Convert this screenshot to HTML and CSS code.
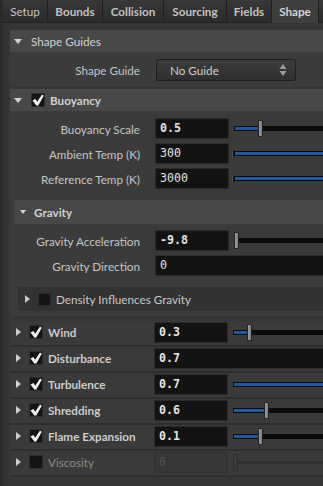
FILE: index.html
```html
<!DOCTYPE html>
<html lang="en">
  <head>
    <meta charset="UTF-8" />
    <title>Shape</title>
    <link rel="stylesheet" href="styles.css">
  </head>
  <body>
    <div class="tabs">
      <div class="tab w-setup">Setup</div>
      <div class="tab bold w-bounds">Bounds</div>
      <div class="tab bold w-collision">Collision</div>
      <div class="tab bold w-sourcing">Sourcing</div>
      <div class="tab bold w-fields">Fields</div>
      <div class="tab bold active w-shape">Shape</div>
      <div class="tab w-more"></div>
    </div>

    <div class="panel">
      <!-- Shape Guides -->
      <div class="folder">
        <div class="folder-head">
          <span class="tri-down"></span>
          <span class="head-title">Shape Guides</span>
        </div>
        <div class="folder-body guides">
          <div class="row">
            <span class="label">Shape Guide</span>
            <div class="menu">
              <span>No Guide</span>
              <svg class="updown" width="8" height="12" viewBox="0 0 8 12">
                <path d="M4 0 L7.5 5 L0.5 5 Z" fill="#9a9a9a" />
                <path d="M4 12 L7.5 7 L0.5 7 Z" fill="#9a9a9a" />
              </svg>
            </div>
          </div>
        </div>
      </div>

      <!-- Buoyancy -->
      <div class="folder">
        <div class="folder-head">
          <span class="tri-down"></span>
          <span class="check on"><svg width="12" height="12" viewBox="0 0 12 12"><path d="M0.5 6.6 L3.5 5.1 L5.2 7.8 L10 0.4 L11.8 1.7 L6.3 11.6 L4.3 11.6 Z" fill="#f2f2f2" /></svg></span>
          <span class="head-title bold">Buoyancy</span>
        </div>
        <div class="folder-body buoyancy">
          <div class="row">
            <span class="label">Buoyancy Scale</span>
            <div class="field bold">0.5</div>
            <div class="slider"><span class="fill" style="width: 24px"></span><span class="knob"></span><span class="rest"></span></div>
          </div>
          <div class="row">
            <span class="label">Ambient Temp (K)</span>
            <div class="field">300</div>
            <div class="slider"><span class="stub"></span><span class="fill full"></span></div>
          </div>
          <div class="row">
            <span class="label">Reference Temp (K)</span>
            <div class="field">3000</div>
            <div class="slider"><span class="stub"></span><span class="fill full"></span></div>
          </div>

          <!-- Gravity -->
          <div class="folder gravity">
            <div class="folder-head sub">
              <span class="tri-down"></span>
              <span class="head-title bold">Gravity</span>
            </div>
            <div class="folder-body">
              <div class="row">
                <span class="label">Gravity Acceleration</span>
                <div class="field bold">-9.8</div>
                <div class="slider"><span class="knob"></span><span class="rest"></span></div>
              </div>
              <div class="row">
                <span class="label">Gravity Direction</span>
                <div class="field wide">0</div>
              </div>
              <div class="density">
                <span class="tri-right"></span>
                <span class="check"></span>
                <span class="head-title">Density Influences Gravity</span>
              </div>
            </div>
          </div>
        </div>
      </div>

      <!-- Toggle folders -->
      <div class="toggles">
        <div class="toggle">
          <span class="tri-right"></span>
          <span class="check on"><svg width="12" height="12" viewBox="0 0 12 12"><path d="M0.5 6.6 L3.5 5.1 L5.2 7.8 L10 0.4 L11.8 1.7 L6.3 11.6 L4.3 11.6 Z" fill="#f2f2f2" /></svg></span>
          <span class="toggle-name">Wind</span>
          <div class="field bold">0.3</div>
          <div class="slider"><span class="fill" style="width: 14px"></span><span class="knob"></span><span class="rest"></span></div>
        </div>
        <div class="toggle">
          <span class="tri-right"></span>
          <span class="check on"><svg width="12" height="12" viewBox="0 0 12 12"><path d="M0.5 6.6 L3.5 5.1 L5.2 7.8 L10 0.4 L11.8 1.7 L6.3 11.6 L4.3 11.6 Z" fill="#f2f2f2" /></svg></span>
          <span class="toggle-name">Disturbance</span>
          <div class="field bold wide">0.7</div>
        </div>
        <div class="toggle">
          <span class="tri-right"></span>
          <span class="check on"><svg width="12" height="12" viewBox="0 0 12 12"><path d="M0.5 6.6 L3.5 5.1 L5.2 7.8 L10 0.4 L11.8 1.7 L6.3 11.6 L4.3 11.6 Z" fill="#f2f2f2" /></svg></span>
          <span class="toggle-name">Turbulence</span>
          <div class="field bold">0.7</div>
          <div class="slider"><span class="fill full"></span></div>
        </div>
        <div class="toggle">
          <span class="tri-right"></span>
          <span class="check on"><svg width="12" height="12" viewBox="0 0 12 12"><path d="M0.5 6.6 L3.5 5.1 L5.2 7.8 L10 0.4 L11.8 1.7 L6.3 11.6 L4.3 11.6 Z" fill="#f2f2f2" /></svg></span>
          <span class="toggle-name">Shredding</span>
          <div class="field bold">0.6</div>
          <div class="slider"><span class="fill" style="width: 31px"></span><span class="knob"></span><span class="rest"></span></div>
        </div>
        <div class="toggle">
          <span class="tri-right"></span>
          <span class="check on"><svg width="12" height="12" viewBox="0 0 12 12"><path d="M0.5 6.6 L3.5 5.1 L5.2 7.8 L10 0.4 L11.8 1.7 L6.3 11.6 L4.3 11.6 Z" fill="#f2f2f2" /></svg></span>
          <span class="toggle-name">Flame Expansion</span>
          <div class="field bold">0.1</div>
          <div class="slider"><span class="fill" style="width: 25px"></span><span class="knob"></span><span class="rest"></span></div>
        </div>
        <div class="toggle off">
          <span class="tri-right"></span>
          <span class="check"></span>
          <span class="toggle-name">Viscosity</span>
          <div class="field">0</div>
          <div class="slider"><span class="knob"></span><span class="rest"></span></div>
        </div>
      </div>
    </div>
  </body>
</html>
```

FILE: styles.css
```css
* {
  margin: 0;
  padding: 0;
  box-sizing: border-box;
}

body {
  width: 323px;
  height: 486px;
  overflow: hidden;
  background: #353535;
  color: #c6c6c6;
  font-family: 'Lato', 'Noto Sans', sans-serif;
  font-size: 11.7px;
  border-left: 3px solid #2a2a2a;
}

.bold {
  font-weight: bold;
}

/* Tabs */
.tabs {
  display: flex;
  gap: 1px;
  height: 23px;
  background: #1f1f1f;
  border-bottom: 1px solid #222;
  width: 340px;
}

.tab {
  flex: none;
  height: 22px;
  line-height: 22px;
  text-align: center;
  background: linear-gradient(to bottom, #383838, #2b2b2b);
  color: #c2c2c2;
}

.tab.active {
  height: 23px;
  background: #3e3e3e;
  color: #d4d4d4;
}

.w-setup { width: 44px; }
.w-bounds { width: 54px; }
.w-collision { width: 60px; }
.w-sourcing { width: 62px; }
.w-fields { width: 44px; }
.w-shape { width: 46px; }
.w-more { width: 20px; }

/* Panel */
.panel {
  padding: 7px 0 0 7px;
  width: 360px;
}

.folder {
  margin-bottom: 2px;
}

.folder-head {
  display: flex;
  align-items: center;
  height: 22px;
  background: #484848;
  color: #d2d2d2;
}

.folder-head.sub {
  height: 24px;
}

.tri-down {
  width: 0;
  height: 0;
  margin: 0 9px 0 4px;
  border-left: 4px solid transparent;
  border-right: 4px solid transparent;
  border-top: 5px solid #d4d4d4;
}

.gravity .tri-down {
  margin: 0 8px 0 6px;
  border-left-width: 3px;
  border-right-width: 3px;
  border-top-width: 4px;
}

.tri-right {
  width: 0;
  height: 0;
  margin: 0 9px 0 6px;
  border-top: 4px solid transparent;
  border-bottom: 4px solid transparent;
  border-left: 5px solid #cfcfcf;
}

.check {
  display: flex;
  align-items: center;
  justify-content: center;
  flex: none;
  width: 14px;
  height: 14px;
  margin-right: 5px;
  background: #141414;
  border: 1px solid #2c2c2c;
}

.folder-body {
  background: #3b3b3b;
}

.guides {
  height: 35px;
  display: flex;
  align-items: center;
}

.buoyancy {
  padding: 7px 0 0;
}

.row {
  display: flex;
  align-items: center;
  height: 21px;
  margin-bottom: 4px;
}

.label {
  flex: none;
  width: 130px;
  margin-right: 15px;
  text-align: right;
}

.gravity .label {
  width: 126px;
}

.guides .row {
  margin: 0;
}

.guides .label {
  margin-right: 16px;
}

.menu {
  display: flex;
  align-items: center;
  justify-content: space-between;
  width: 140px;
  height: 22px;
  padding: 0 8px 0 13px;
  background: linear-gradient(to bottom, #3c3c3c, #2f2f2f);
  border: 1px solid #1e1e1e;
  border-radius: 2px;
  color: #cfcfcf;
}

.field {
  flex: none;
  width: 74px;
  height: 21px;
  line-height: 19px;
  padding-left: 4px;
  background: #131313;
  border: 1px solid #2b2b2b;
  color: #e4e4e4;
  font-family: 'DejaVu Sans Mono', monospace;
  font-size: 11.6px;
}

.field.wide {
  width: 200px;
}

/* Slider */
.slider {
  flex: 1;
  display: flex;
  align-items: center;
  margin-left: 5px;
  height: 21px;
}

.fill {
  flex: none;
  height: 5px;
  background: #1d5aa3;
  border: 1px solid #0a0a0a;
  border-right: none;
}

.fill.full {
  flex: 1;
  border-right: 1px solid #0a0a0a;
}

.rest {
  flex: 1;
  height: 5px;
  background: #0b0b0b;
}

.knob {
  flex: none;
  width: 5px;
  height: 17px;
  background: linear-gradient(to right, #9c9c9c, #7d7d7d);
  border: 1px solid #222;
  border-radius: 1px;
}

.stub {
  flex: none;
  width: 2px;
  height: 8px;
  margin-left: -2px;
  background: #111;
  border-left: 1px solid #555;
}

/* Gravity */
.gravity {
  margin: 11px 0 0 4px;
}

.gravity .folder-body {
  padding: 6px 0 5px;
}

.density {
  display: flex;
  align-items: center;
  height: 24px;
  margin: 11px 0 0 4px;
  background: #323232;
}

.density .tri-right {
  margin: 0 8px 0 7px;
  border-left-color: #c8c8c8;
}

.density .check {
  width: 13px;
  height: 13px;
  margin-right: 5px;
}

.density .head-title {
  color: #c8c8c8;
}

/* Toggle rows */
.toggles {
  margin-top: 5px;
}

.toggle {
  display: flex;
  align-items: center;
  height: 26px;
  padding-bottom: 2px;
  background: #3a3a3a;
  border-bottom: 2px solid #2e2e2e;
}

.toggle-name {
  flex: none;
  width: 106px;
  color: #cdcdcd;
  font-weight: bold;
}

.toggle .check {
  margin-left: -1px;
}

.toggle.off .toggle-name {
  color: #8a8a8a;
  font-weight: normal;
}

.toggle.off .field {
  background: #363636;
  border-color: #303030;
  color: #555;
}

.toggle.off .knob {
  background: #3a3a3a;
  border-color: #2c2c2c;
}

.toggle.off .rest {
  background: #2e2e2e;
  height: 3px;
}
```
